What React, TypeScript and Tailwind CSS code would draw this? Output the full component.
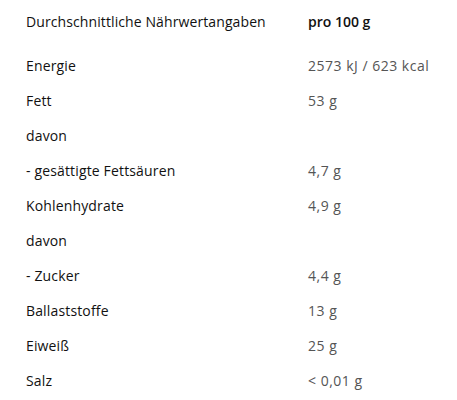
const rows: [string, string][] = [
  ["Energie", "2573 kJ / 623 kcal"],
  ["Fett", "53 g"],
  ["davon", ""],
  ["- gesättigte Fettsäuren", "4,7 g"],
  ["Kohlenhydrate", "4,9 g"],
  ["davon", ""],
  ["- Zucker", "4,4 g"],
  ["Ballaststoffe", "13 g"],
  ["Eiweiß", "25 g"],
  ["Salz", "< 0,01 g"],
];

export default function App() {
  return (
    <div className="min-h-[400px] w-[457px] bg-white pl-[26px] pt-[4px] font-['Open_Sans',sans-serif] text-[14px]">
      <div className="grid h-[35px] grid-cols-[282px_1fr] items-center">
        <span className="tracking-[0.1px] text-[#111]">Durchschnittliche Nährwertangaben</span>
        <span className="font-semibold text-[#111]">pro 100 g</span>
      </div>
      <div className="mt-[9px]">
        {rows.map(([label, value], i) => (
          <div key={i} className="grid h-[35px] grid-cols-[282px_1fr] items-center">
            <span className="tracking-[0.15px] text-[#111]">{label}</span>
            <span className="tracking-[0.5px] text-[#555]">{value}</span>
          </div>
        ))}
      </div>
    </div>
  );
}
